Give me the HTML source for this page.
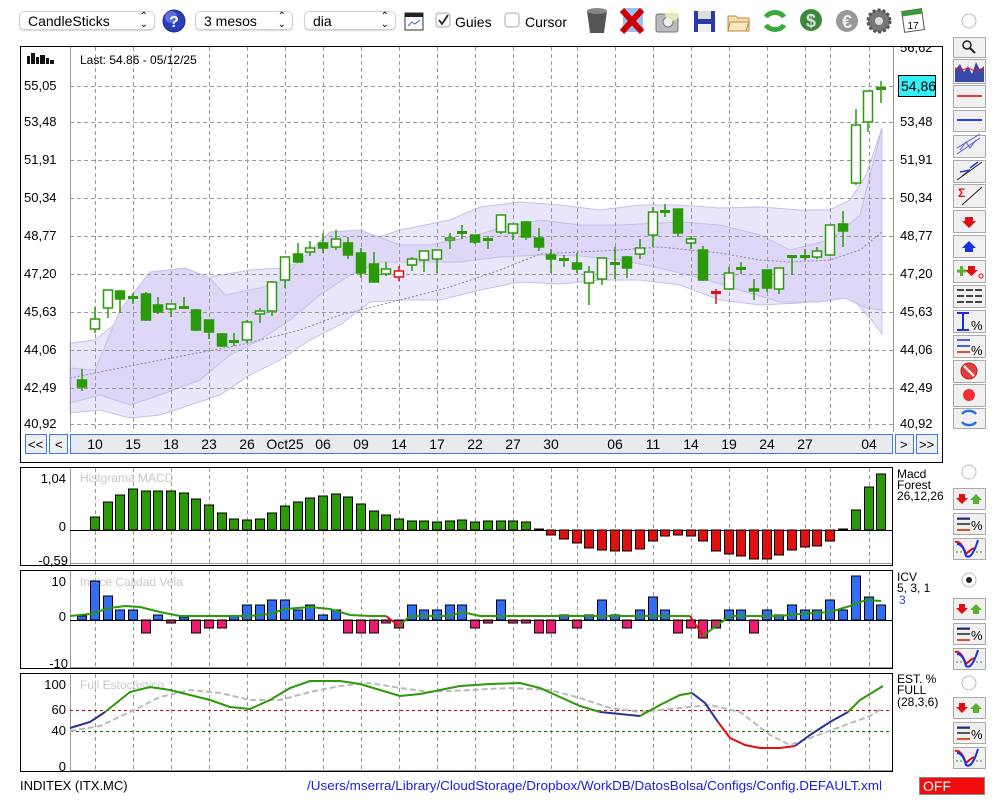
<!DOCTYPE html>
<html><head><meta charset="utf-8">
<style>
body{margin:0;background:#fff;font-family:"Liberation Sans",sans-serif;}
#wrap{position:relative;width:1000px;height:800px;overflow:hidden;background:#fff}
.sel{position:absolute;top:11px;height:19px;border:1px solid #d0d0d0;border-radius:5px;background:#fff;font-size:14px;line-height:19px;padding-left:8px;box-sizing:border-box;box-shadow:0 1px 1px rgba(0,0,0,.15)}
.sel b{position:absolute;right:6px;top:1px;font-weight:normal;font-size:10px;line-height:8px}
</style></head><body><div id="wrap">
<div class="sel" style="left:19px;width:136px">CandleSticks<b>&#8963;<br>&#8964;</b></div>
<div class="sel" style="left:195px;width:98px">3 mesos<b>&#8963;<br>&#8964;</b></div>
<div class="sel" style="left:304px;width:92px">dia<b>&#8963;<br>&#8964;</b></div>
<svg id="s" width="1000" height="800" style="position:absolute;left:0;top:0" xmlns="http://www.w3.org/2000/svg" font-family="Liberation Sans, sans-serif">
<defs><clipPath id="cp"><rect x="894" y="47" width="48" height="30"/></clipPath></defs>
<circle cx="174" cy="21" r="11" fill="#2b3fb8" stroke="#1a2a80"/><circle cx="171" cy="17" r="6" fill="#7f8ff0" opacity=".6"/>
<text x="174" y="27" font-size="16" font-weight="bold" fill="#fff" text-anchor="middle">?</text>
<rect x="405" y="13" width="18" height="17" fill="#fff" stroke="#333"/><rect x="405" y="13" width="18" height="4" fill="#222"/><path d="M408 26 l4-4 3 2 5-4" stroke="#36c" fill="none"/>
<rect x="436" y="13" width="14" height="14" rx="3" fill="#fff" stroke="#aaa"/><path d="M439 20 l3 4 6-9" stroke="#222" stroke-width="1.8" fill="none"/>
<text x="455" y="27" font-size="14">Guies</text>
<rect x="505" y="13" width="14" height="14" rx="3" fill="#fff" stroke="#aaa"/>
<text x="525" y="27" font-size="14">Cursor</text>
<path d="M587 11 h20 l-3 22 h-14z" fill="#555"/><ellipse cx="597" cy="11" rx="10" ry="3" fill="#888"/>
<rect x="623" y="8" width="20" height="24" fill="#9cc0f0"/><path d="M622 10 l20 22 M642 10 l-20 22" stroke="#c00" stroke-width="6"/>
<rect x="656" y="14" width="22" height="18" rx="2" fill="#bbb" stroke="#777"/><circle cx="668" cy="22" r="5" fill="#eee" stroke="#777"/><circle cx="672" cy="14" r="7" fill="#ffffcc" opacity=".7"/>
<rect x="694" y="11" width="21" height="21" fill="#2a3aa8"/><rect x="698" y="11" width="13" height="8" fill="#ddd"/><rect x="698" y="24" width="13" height="8" fill="#eee"/>
<path d="M728 16 h8 l2 2 h11 v13 h-21z" fill="#f6deb0" stroke="#c08a40"/><path d="M730 22 h19 l-3 9 h-18z" fill="#fbe7c0" stroke="#c08a40"/>
<path d="M766 17 a10 8 0 0 1 18 0 M784 25 a10 8 0 0 1 -18 0" stroke="#3aa83a" stroke-width="5" fill="none"/>
<circle cx="811" cy="20" r="11" fill="#3b8a3b"/><text x="811" y="27" font-size="18" font-weight="bold" fill="#ddd" text-anchor="middle">$</text>
<circle cx="847" cy="21" r="11" fill="#999"/><text x="847" y="28" font-size="18" font-weight="bold" fill="#eee" text-anchor="middle">€</text>
<circle cx="879" cy="21" r="11" fill="#777" stroke="#555" stroke-width="3" stroke-dasharray="3 2"/><circle cx="879" cy="21" r="4" fill="#ddd"/>
<rect x="903" y="10" width="20" height="21" fill="#fff" stroke="#555" transform="rotate(-8 913 20)"/><rect x="903" y="10" width="20" height="5" fill="#3a9a3a" transform="rotate(-8 913 20)"/><text x="913" y="29" font-size="10" text-anchor="middle">17</text>
<circle cx="969" cy="21" r="7" fill="#fff" stroke="#bbb"/>
<rect x="20.5" y="46.5" width="922" height="416" fill="#fff" stroke="#000"/>
<g fill="#111"><rect x="27" y="56" width="3" height="8"/><rect x="31" y="53" width="4" height="11"/><rect x="36" y="57" width="3" height="7"/><rect x="40" y="55" width="5" height="9"/><rect x="46" y="58" width="3" height="6"/><rect x="50" y="60" width="4" height="4"/></g>
<g id="bands"></g>
<g id="grid" stroke="#999" stroke-dasharray="4 3" stroke-width="1"></g>
<line x1="70.5" y1="47" x2="70.5" y2="432" stroke="#999"/><line x1="893.5" y1="47" x2="893.5" y2="432" stroke="#999"/>
<text x="80" y="64" font-size="12">Last: 54.86 - 05/12/25</text>
<g id="ylab" font-size="13"></g>
<text x="900" y="52" font-size="13" clip-path="url(#cp)">56,62</text>
<rect x="898.5" y="75.5" width="37" height="21" fill="#33f0f8" stroke="#000"/><text x="901" y="91" font-size="14">54,86</text>
<g id="candles"></g>
<g font-size="13" stroke-width="1">
<rect x="25.5" y="434.5" width="21" height="19" fill="#eef0f4" stroke="#3a7af0"/><text x="28" y="449">&lt;&lt;</text>
<rect x="49.5" y="434.5" width="18" height="19" fill="#eef0f4" stroke="#3a7af0"/><text x="55" y="449">&lt;</text>
<rect x="70.5" y="434.5" width="822" height="19" fill="#e9eaf0" stroke="#3a7af0"/>
<rect x="895.5" y="434.5" width="18" height="19" fill="#eef0f4" stroke="#3a7af0"/><text x="900" y="449">&gt;</text>
<rect x="916.5" y="434.5" width="21" height="19" fill="#eef0f4" stroke="#3a7af0"/><text x="919" y="449">&gt;&gt;</text>
<g id="xlab" font-size="14" text-anchor="middle"></g>
</g>
<rect x="20.5" y="467.5" width="872" height="98" fill="#fff" stroke="#000"/>
<line x1="70.5" y1="468" x2="70.5" y2="565" stroke="#999"/><line x1="70" y1="563.5" x2="892" y2="563.5" stroke="#999"/>
<g id="grid2" stroke="#999" stroke-dasharray="4 3"></g>
<text x="80" y="482" font-size="12" fill="#c8c8c8">Histgrama MACD</text>
<text x="66" y="483" font-size="13" text-anchor="end">1,04</text><text x="66" y="531" font-size="13" text-anchor="end">0</text><text x="68" y="565" font-size="13" text-anchor="end">-0,59</text>
<line x1="70" y1="530.5" x2="892" y2="530.5" stroke="#000"/>
<g id="macd"></g>
<text x="897" y="478" font-size="12">Macd</text><text x="897" y="489" font-size="12">Forest</text><text x="897" y="500" font-size="12">26,12,26</text>
<rect x="20.5" y="570.5" width="872" height="98" fill="#fff" stroke="#000"/>
<line x1="70.5" y1="571" x2="70.5" y2="668" stroke="#999"/><line x1="70" y1="667.5" x2="892" y2="667.5" stroke="#999"/>
<g id="grid3" stroke="#999" stroke-dasharray="4 3"></g>
<text x="80" y="586" font-size="12" fill="#c8c8c8">Indice Calidad Vela</text>
<text x="66" y="586" font-size="13" text-anchor="end">10</text><text x="66" y="621" font-size="13" text-anchor="end">0</text><text x="68" y="668" font-size="13" text-anchor="end">-10</text>
<g id="icv"></g>
<line x1="70" y1="620.5" x2="892" y2="620.5" stroke="#000"/>
<polyline fill="none" stroke="#2a9a08" stroke-width="2" points="70,616 90,614 110,608 125,606 140,607 160,612 180,616 250,616 270,614 285,609 310,607 330,609 350,615 370,616 386,616"/>
<polyline fill="none" stroke="#e01010" stroke-width="2" points="386,616 399,626"/>
<polyline fill="none" stroke="#2a9a08" stroke-width="2" points="399,626 410,616 450,616 462,612 480,616 560,616 590,616 620,616 650,616 680,616 690,616"/>
<polyline fill="none" stroke="#e01010" stroke-width="2" points="690,616 703,636"/>
<polyline fill="none" stroke="#2a9a08" stroke-width="2" points="703,636 716,626 730,616 780,616 800,614 830,612 850,606 866,600 881,601"/>
<text x="897" y="581" font-size="12">ICV</text><text x="897" y="592" font-size="12">5, 3, 1</text><text x="899" y="604" font-size="12" fill="#2a4af0">3</text>
<rect x="20.5" y="673.5" width="872" height="98" fill="#fff" stroke="#000"/>
<line x1="70.5" y1="674" x2="70.5" y2="771" stroke="#999"/><line x1="70" y1="770.5" x2="892" y2="770.5" stroke="#999"/>
<g id="grid4" stroke="#999" stroke-dasharray="4 3"></g>
<line x1="70" y1="710.5" x2="892" y2="710.5" stroke="#c00" stroke-dasharray="3 3"/>
<line x1="70" y1="731.5" x2="892" y2="731.5" stroke="#070" stroke-dasharray="3 3"/>
<text x="80" y="689" font-size="12" fill="#c8c8c8">Full Estocástico</text>
<text x="66" y="689" font-size="13" text-anchor="end">100</text><text x="66" y="714" font-size="13" text-anchor="end">60</text><text x="66" y="735" font-size="13" text-anchor="end">40</text><text x="66" y="771" font-size="13" text-anchor="end">0</text>
<polyline fill="none" stroke="#bbb" stroke-width="2" stroke-dasharray="6 3" points="70,731 100,726 130,712 160,697 190,690 220,693 250,700 280,700 310,692 340,686 370,683 400,688 430,692 470,690 510,688 550,690 580,698 610,708 640,712 680,708 710,705 740,712 770,735 790,745 810,738 840,727 870,716 883,708"/>
<polyline fill="none" stroke="#30309a" stroke-width="2" points="70,728 90,722 105,712"/>
<polyline fill="none" stroke="#2a9a08" stroke-width="2" points="105,712 130,692 150,687 170,690 190,695 210,700 230,707 250,709 270,700 290,688 310,681 340,681 360,684 380,690 400,696 420,694 440,690 460,686 490,684 520,683 540,688 560,697 580,706 600,712"/>
<polyline fill="none" stroke="#30309a" stroke-width="2" points="600,712 620,714 640,716"/>
<polyline fill="none" stroke="#2a9a08" stroke-width="2" points="640,716 660,705 680,695 692,693"/>
<polyline fill="none" stroke="#30309a" stroke-width="2" points="692,693 705,703 718,722"/>
<polyline fill="none" stroke="#e01010" stroke-width="2" points="718,722 730,738 745,745 760,748 780,748 795,746"/>
<polyline fill="none" stroke="#30309a" stroke-width="2" points="795,746 810,735 830,722 848,712"/>
<polyline fill="none" stroke="#2a9a08" stroke-width="2" points="848,712 860,700 883,686"/>
<text x="897" y="683" font-size="12">EST. %</text><text x="897" y="694" font-size="12">FULL</text><text x="897" y="706" font-size="12">(28,3,6)</text>
<text x="20" y="790" font-size="13">INDITEX (ITX.MC)</text>
<text x="307" y="790" font-size="13" fill="#1a20e0" textLength="575" lengthAdjust="spacingAndGlyphs">/Users/mserra/Library/CloudStorage/Dropbox/WorkDB/DatosBolsa/Configs/Config.DEFAULT.xml</text>
<rect x="919.5" y="777.5" width="65" height="17" fill="#ef0d0d" stroke="#888"/><text x="923" y="791" font-size="14" fill="#fff">OFF</text>
<g id="side"></g>
</svg>
<script>
var NS="http://www.w3.org/2000/svg";
function el(p,t,a){var e=document.createElementNS(NS,t);for(var k in a)e.setAttribute(k,a[k]);document.getElementById(p).appendChild(e);return e;}
function txt(p,x,y,s,a){var e=el(p,"text",Object.assign({x:x,y:y},a||{}));e.textContent=s;}
el("bands","polygon",{points:"70,343 95,340 120,320 150,305 185,290 210,277 250,270 280,268 310,260 335,253 370,240 400,230 450,220 480,207 520,202 560,205 600,210 640,205 680,205 720,208 760,207 800,210 830,210 850,200 866,175 882,128 882,334 870,318 850,296 830,300 800,303 760,305 720,300 680,285 640,280 600,280 560,284 520,282 480,290 440,300 400,300 370,302 340,325 310,340 280,360 250,375 220,395 190,405 160,415 130,418 100,410 70,413",fill:"#e9e6fc",stroke:"#c6c0e8"});
el("bands","polygon",{points:"70,368 95,370 120,310 150,272 185,268 210,278 225,295 260,288 280,282 300,260 330,232 360,230 400,245 430,245 470,237 500,228 540,220 580,225 620,225 680,222 720,225 760,235 790,250 830,240 860,215 882,128 882,310 866,308 845,298 820,302 780,302 740,290 700,278 660,268 620,260 580,256 540,255 500,257 460,262 420,262 380,262 350,275 320,295 290,320 260,340 230,355 200,380 160,395 130,405 100,395 70,403",fill:"#ded7f8",stroke:"#c6c0e8"});
el("bands","polyline",{points:"70,378 150,362 240,345 300,330 340,315 400,300 450,287 500,270 540,254 580,252 620,250 660,247 720,253 760,260 790,262 830,260 860,250 882,232",fill:"none",stroke:"#8a84a8","stroke-dasharray":"2 2"});
var gx=[95,133,171,209,247,285,323,361,399,437,475,513,551,577,615,653,691,729,767,805,830,869];
var gy=[86,122,160,198,236,274,312,350,388,424];
gx.forEach(function(x){el("grid","line",{x1:x+.5,y1:47,x2:x+.5,y2:432});["grid2","grid3","grid4"].forEach(function(g,i){var y0=[468,571,674][i];el(g,"line",{x1:x+.5,y1:y0,x2:x+.5,y2:y0+96});});});
gy.forEach(function(y){el("grid","line",{x1:70,y1:y+.5,x2:893,y2:y+.5});});
var yl=["55,05","53,48","51,91","50,34","48,77","47,20","45,63","44,06","42,49","40,92"];
yl.forEach(function(s,i){txt("ylab",24,gy[i]+4,s);if(i>0)txt("ylab",900,gy[i]+4,s);});
var xl=[[95,"10"],[133,"15"],[171,"18"],[209,"23"],[247,"26"],[285,"Oct25"],[323,"06"],[361,"09"],[399,"14"],[437,"17"],[475,"22"],[513,"27"],[551,"30"],[615,"06"],[653,"11"],[691,"14"],[729,"19"],[767,"24"],[805,"27"],[869,"04"]];
xl.forEach(function(a){txt("xlab",a[0],449,a[1]);});
var C=[[82,380,387,369,391,"f"],[95,319,329,307,333,"h"],[108,290,308,290,318,"h"],[120,291,299,291,313,"f"],[133,297,297,293,304,"d"],[146,294,320,292,321,"f"],[158,305,312,297,314,"f"],[171,304,309,304,317,"h"],[184,307,307,297,308,"d"],[196,310,330,309,331,"f"],[209,320,332,320,339,"f"],[222,334,346,333,347,"f"],[234,341,341,333,346,"d"],[247,322,340,320,343,"h"],[260,311,314,308,323,"h"],[272,282,311,281,316,"h"],[285,257,280,257,288,"h"],[298,254,262,243,263,"f"],[310,248,252,241,256,"h"],[323,243,248,233,253,"f"],[336,239,247,230,250,"h"],[348,243,255,237,259,"f"],[361,253,273,248,278,"f"],[374,264,282,252,282,"f"],[386,269,274,262,276,"h"],[399,271,277,266,281,"r"],[412,259,265,257,271,"h"],[424,251,260,251,272,"h"],[437,250,259,250,273,"h"],[450,238,240,233,249,"h"],[462,232,232,225,239,"d"],[475,235,242,235,244,"f"],[488,239,239,236,249,"d"],[501,215,232,215,234,"h"],[513,224,233,224,240,"h"],[526,222,237,221,240,"f"],[539,238,247,228,251,"f"],[551,255,259,249,273,"f"],[564,259,259,255,267,"d"],[577,263,269,253,273,"f"],[589,272,283,266,305,"h"],[602,258,279,258,285,"h"],[615,263,263,247,279,"d"],[627,257,268,256,278,"f"],[640,248,254,239,259,"h"],[653,212,235,207,247,"h"],[665,211,211,204,217,"d"],[678,209,233,209,237,"f"],[691,239,243,236,249,"h"],[703,250,280,246,281,"f"],[716,292,292,289,304,"rd"],[729,273,289,267,290,"h"],[741,268,268,262,274,"d"],[754,289,291,279,300,"f"],[767,270,288,270,292,"f"],[779,268,289,268,294,"h"],[792,256,256,255,275,"d"],[805,256,256,249,260,"d"],[817,251,257,247,259,"h"],[830,225,255,225,256,"h"],[843,224,231,211,247,"f"],[856,125,183,109,185,"h"],[868,91,122,91,132,"h"],[881,88,88,81,103,"d"]];
C.forEach(function(c){var x=c[0],col=(c[5][0]=="r")?"#e01010":"#2a9a08";
el("candles","line",{x1:x,y1:c[3],x2:x,y2:c[4],stroke:col,"stroke-width":1.5});
if(c[5]=="d"||c[5]=="rd"){el("candles","rect",{x:x-5,y:c[1]-1,width:10,height:3,fill:col});}
else{var h=Math.max(c[2]-c[1],2);el("candles","rect",{x:x-4.5,y:c[1],width:9,height:h,fill:c[5]=="f"?col:"#fff",stroke:col,"stroke-width":1.5});}});
var M=[[95,517],[108,502],[120,495],[133,489],[146,491],[158,491],[171,491],[184,493],[196,499],[209,505],[222,513],[234,519],[247,520],[260,519],[272,513],[285,506],[298,502],[310,498],[323,496],[336,494],[348,497],[361,504],[374,511],[386,515],[399,519],[412,521],[424,521],[437,522],[450,521],[462,520],[475,522],[488,521],[501,521],[513,521],[526,522],[539,529],[551,535],[564,539],[577,543],[589,548],[602,550],[615,551],[627,551],[640,549],[653,541],[665,536],[678,535],[691,536],[703,541],[716,551],[729,554],[741,556],[754,559],[767,559],[779,555],[792,550],[805,547],[817,546],[830,541],[843,529],[856,510],[869,487],[881,474]];
M.forEach(function(m){var y=m[1],up=y<530;el("macd","rect",{x:m[0]-4.5,y:up?y:530,width:9,height:Math.abs(530-y),fill:up?"#2a9a08":"#e01010",stroke:"#000","stroke-width":1});});
var I=[[82,616],[95,581],[108,596],[120,610],[133,610],[146,633],[158,615],[171,623],[184,617],[196,633],[209,628],[222,628],[234,616],[247,605],[260,605],[272,600],[285,600],[298,610],[310,605],[323,615],[336,610],[348,633],[361,633],[374,633],[386,623],[399,628],[412,605],[424,610],[437,610],[450,605],[462,605],[475,628],[488,623],[501,600],[513,623],[526,623],[539,633],[551,633],[564,615],[577,628],[589,615],[602,600],[615,615],[627,628],[640,610],[653,597],[665,610],[678,633],[691,628],[703,638],[716,628],[729,610],[741,610],[754,633],[767,610],[779,615],[792,605],[805,610],[817,610],[830,600],[843,610],[856,576],[869,597],[881,605]];
I.forEach(function(m){var y=m[1],up=y<620;el("icv","rect",{x:m[0]-4.5,y:up?y:620,width:9,height:Math.abs(620-y),fill:up?"#2f6ef5":"#ef1a72",stroke:"#000","stroke-width":1});});
function btn(y,h){el("side","rect",{x:953.5,y:y+.5,width:32,height:h,fill:"#f0f0f0",stroke:"#aaa"});}
var B=[[37,20],[59,24],[85,22],[110,21],[135,22],[160,22],[184,23],[210,22],[235,22],[260,22],[285,22],[310,22],[335,22],[360,22],[384,22],[408,20]];
B.forEach(function(b){btn(b[0],b[1]);});
el("side","circle",{cx:967,cy:45,r:4,fill:"none",stroke:"#222","stroke-width":1.5});el("side","line",{x1:970,y1:48,x2:975,y2:53,stroke:"#222","stroke-width":2});
el("side","polygon",{points:"955,82 955,70 960,64 964,72 968,66 972,74 976,62 980,70 984,66 984,82",fill:"#3a4aa8"});el("side","polyline",{points:"955,68 962,70 968,68 975,71 984,68",fill:"none",stroke:"#e01010"});
el("side","line",{x1:957,y1:96,x2:982,y2:96,stroke:"#e04040","stroke-width":2});
el("side","line",{x1:957,y1:120,x2:982,y2:120,stroke:"#2040e0","stroke-width":2});
el("side","path",{d:"M957 154 L980 138 M960 150 l6 -8 4 6 6 -8 M957 148 L980 134",stroke:"#5a5ad0",fill:"none"});
el("side","path",{d:"M957 180 L982 162 M962 176 l8 -6",stroke:"#222",fill:"none"});el("side","path",{d:"M960 172 l10 -2 M970 168 l8 -6",stroke:"#2a3ae0","stroke-width":1.5});
txt("side",958,197,"Σ",{fill:"#e01010","font-size":12,"font-weight":"bold"});el("side","path",{d:"M962 205 L982 187",stroke:"#222",fill:"none"});
el("side","polygon",{points:"965,217 973,217 973,221 976,221 969,228 962,221 965,221",fill:"#e01010"});
el("side","polygon",{points:"965,252 973,252 973,248 976,248 969,241 962,248 965,248",fill:"#1a30e0"});
el("side","path",{d:"M957 271 h9 M961.5 266 v10",stroke:"#5ab030","stroke-width":3});el("side","polygon",{points:"968,266 975,266 975,270 978,270 971.5,276 965,270 968,270",fill:"#e01010"});el("side","circle",{cx:981,cy:276,r:2,fill:"none",stroke:"#e01010"});
[290,296,302].forEach(function(y){el("side","path",{d:"M957 "+y+" h26",stroke:"#444","stroke-width":2,"stroke-dasharray":"7 2"});});
el("side","path",{d:"M957 313 h12 M957 330 h12 M963 314 v15",stroke:"#1a30e0","stroke-width":2});txt("side",971,330,"%",{"font-size":13});
el("side","path",{d:"M957 340 h13 M957 346 h13",stroke:"#1a30e0","stroke-width":1.5});el("side","path",{d:"M957 352 h13",stroke:"#e05030","stroke-width":2});txt("side",971,355,"%",{"font-size":13});
el("side","circle",{cx:969,cy:371,r:8,fill:"#e04040",stroke:"#c02020"});el("side","line",{x1:964,y1:366,x2:974,y2:376,stroke:"#fff","stroke-width":2});
el("side","circle",{cx:969,cy:395,r:6,fill:"#f03030"});
el("side","path",{d:"M962 414 a8 6 0 0 1 14 0 M976 422 a8 6 0 0 1 -14 0",stroke:"#2a70e0","stroke-width":2.5,fill:"none"});
[[472,488],[580,598],[683,697]].forEach(function(p,i){
el("side","circle",{cx:969,cy:p[0],r:7,fill:"#fff",stroke:"#bbb"});if(i==1)el("side","circle",{cx:969,cy:p[0],r:3,fill:"#222"});
var y=p[1];btn(y,21);btn(y+25,21);btn(y+50,21);
el("side","polygon",{points:"959,"+(y+6)+" 965,"+(y+6)+" 965,"+(y+10)+" 968,"+(y+10)+" 962,"+(y+16)+" 956,"+(y+10)+" 959,"+(y+10),fill:"#e01010"});
el("side","polygon",{points:"973,"+(y+16)+" 979,"+(y+16)+" 979,"+(y+12)+" 982,"+(y+12)+" 976,"+(y+6)+" 970,"+(y+12)+" 973,"+(y+12),fill:"#5ab030"});
var y2=y+25;el("side","path",{d:"M957 "+(y2+6)+" h13 M957 "+(y2+11)+" h13",stroke:"#222","stroke-width":1.5});el("side","path",{d:"M957 "+(y2+5)+" h13",stroke:"#1a30e0"});el("side","path",{d:"M957 "+(y2+17)+" h13",stroke:"#e05030","stroke-width":2});txt("side",971,y2+17,"%",{"font-size":13});
var y3=y+50;el("side","path",{d:"M956 "+(y3+14)+" h28",stroke:"#2a9a08","stroke-dasharray":"2 2"});
el("side","path",{d:"M955 "+(y3+4)+" q6 -2 11 12 q4 -4 8 -6",stroke:"#e01010","stroke-width":2,fill:"none"});
el("side","path",{d:"M957 "+(y3+6)+" q6 0 9 12 q6 4 12 -16",stroke:"#1a30e0","stroke-width":2,fill:"none"});
});
</script>
</div></body></html>
